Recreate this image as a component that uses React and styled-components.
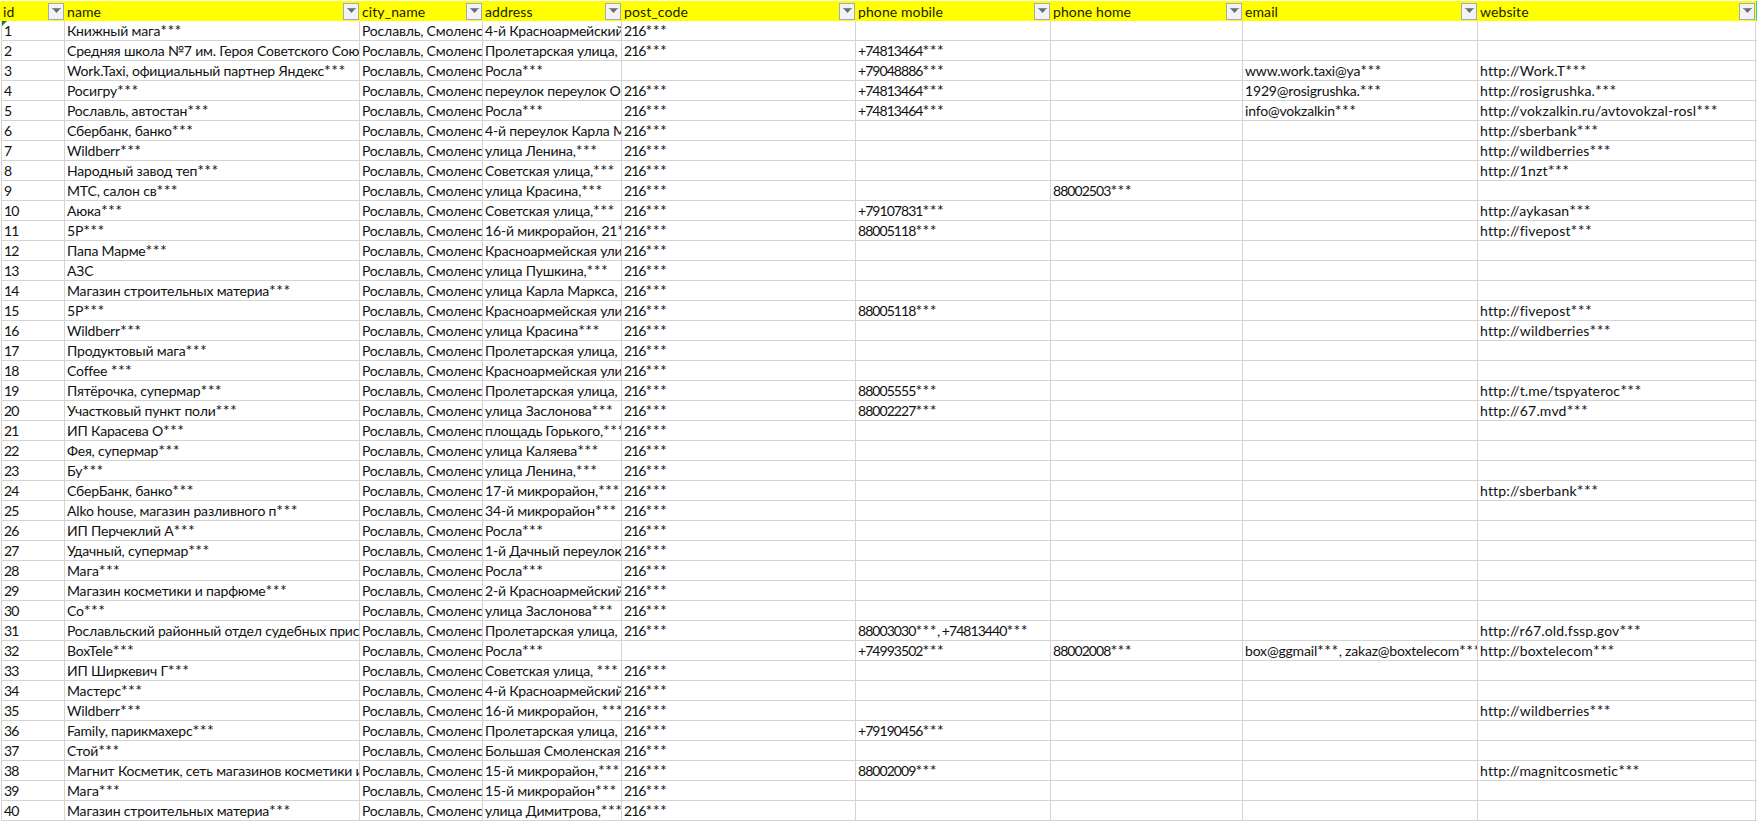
import React from 'react';
import styled, { createGlobalStyle } from 'styled-components';

const GlobalStyle = createGlobalStyle`
  html, body {
    margin: 0;
    padding: 0;
    background: #fff;
    overflow: hidden;
  }
`;

const COLS = '64px 295px 123px 139px 234px 195px 192px 235px 278px';
const SPACING = { digits: '-0.95px', link: '0.17px', text: '-0.18px' };

const Sheet = styled.div`
  width: 1757px;
  height: 821px;
  padding-left: 1px;
  box-sizing: border-box;
  overflow: hidden;
  font-family: 'Lato', 'Noto Sans', sans-serif;
  font-size: 14px;
  color: #111;
`;
const HeaderRow = styled.div`
  position: relative;
  display: grid;
  grid-template-columns: ${COLS};
  height: 20px;
  margin: 1px 0 0 -1px;
  padding-left: 1px;
  background: #ffff00;
`;
const HeaderCell = styled.div`
  display: flex;
  align-items: center;
  justify-content: space-between;
  padding: 0 1px 0 2px;
`;
const HeaderLabel = styled.span`
  line-height: 19px;
  letter-spacing: 0.1px;
  color: #1c1c00;
`;
const FilterButton = styled.div`
  width: 16px;
  height: 17px;
  box-sizing: border-box;
  display: flex;
  align-items: center;
  justify-content: center;
  border: 1px solid #a3a9b8;
  background: #f1f3f7;
`;
const SelectionEdge = styled.div`
  position: absolute;
  top: 0;
  right: 0;
  width: 1px;
  height: 20px;
  background: #2fd889;
`;
const Row = styled.div`
  display: grid;
  grid-template-columns: ${COLS};
  height: 20px;
  box-sizing: border-box;
  border-bottom: 1px solid #d4d4d4;
`;
const Cell = styled.div`
  position: relative;
  box-sizing: border-box;
  padding: 0 0 0 2px;
  border-right: 1px solid #d4d4d4;
  ${p => p.$first && 'border-left: 1px solid #d4d4d4;'}
  letter-spacing: ${p => SPACING[p.$kind || 'text']};
  white-space: nowrap;
  overflow: hidden;
  line-height: 19px;
`;
const Mask = styled.span`
  font-size: 16px;
  line-height: 0;
  letter-spacing: 0.4px;
`;
const ErrorMark = styled.span`
  position: absolute;
  top: 0;
  left: 0;
  width: 0;
  height: 0;
  border-top: 5px solid #107c41;
  border-right: 5px solid transparent;
`;

const FilterArrow = () => (
  <svg width="9" height="6" viewBox="0 0 9 6">
    <path d="M0 0.5h9" stroke="#8a8a8a" strokeWidth="1" />
    <path d="M1 1h7L4.5 5z" fill="#6b6b6b" />
  </svg>
);

// the *** masks are drawn a bit bigger than the rest, like in the sheet
const Masked = ({ text = '' }) => {
  const parts = text.split('***');
  return parts.map((part, i) => (
    <React.Fragment key={i}>
      {part}
      {i < parts.length - 1 && <Mask>***</Mask>}
    </React.Fragment>
  ));
};

const headers = ['id', 'name', 'city_name', 'address', 'post_code', 'phone mobile', 'phone home', 'email', 'website'];

const CITY = 'Рославль, Смоленская область';
const POST = '216***';

// name, address, post, mobile, home, email, website
const rows = [
  ['Книжный мага***', '4-й Красноармейский переулок', POST],
  ['Средняя школа №7 им. Героя Советского Союза', 'Пролетарская улица, 1***', POST, '+74813464***'],
  ['Work.Taxi, официальный партнер Яндекс***', 'Росла***', '', '+79048886***', '', 'www.work.taxi@ya***', 'http://Work.T***'],
  ['Росигру***', 'переулок переулок Октябрьский', POST, '+74813464***', '', '1929@rosigrushka.***', 'http://rosigrushka.***'],
  ['Рославль, автостан***', 'Росла***', POST, '+74813464***', '', 'info@vokzalkin***', 'http://vokzalkin.ru/avtovokzal-rosl***'],
  ['Сбербанк, банко***', '4-й переулок Карла Маркса', POST, '', '', '', 'http://sberbank***'],
  ['Wildberr***', 'улица Ленина,***', POST, '', '', '', 'http://wildberries***'],
  ['Народный завод теп***', 'Советская улица,***', POST, '', '', '', 'http://1nzt***'],
  ['МТС, салон св***', 'улица Красина,***', POST, '', '88002503***'],
  ['Аюка***', 'Советская улица,***', POST, '+79107831***', '', '', 'http://aykasan***'],
  ['5Р***', '16-й микрорайон, 21***', POST, '88005118***', '', '', 'http://fivepost***'],
  ['Папа Марме***', 'Красноармейская улица', POST],
  ['АЗС', 'улица Пушкина,***', POST],
  ['Магазин строительных материа***', 'улица Карла Маркса, ***', POST],
  ['5Р***', 'Красноармейская улица', POST, '88005118***', '', '', 'http://fivepost***'],
  ['Wildberr***', 'улица Красина***', POST, '', '', '', 'http://wildberries***'],
  ['Продуктовый мага***', 'Пролетарская улица, 1', POST],
  ['Coffee ***', 'Красноармейская улица', POST],
  ['Пятёрочка, супермар***', 'Пролетарская улица, 1', POST, '88005555***', '', '', 'http://t.me/tspyateroc***'],
  ['Участковый пункт поли***', 'улица Заслонова***', POST, '88002227***', '', '', 'http://67.mvd***'],
  ['ИП Карасева О***', 'площадь Горького,***', POST],
  ['Фея, супермар***', 'улица Каляева***', POST],
  ['Бу***', 'улица Ленина,***', POST],
  ['СберБанк, банко***', '17-й микрорайон,***', POST, '', '', '', 'http://sberbank***'],
  ['Alko house, магазин разливного п***', '34-й микрорайон***', POST],
  ['ИП Перчеклий А***', 'Росла***', POST],
  ['Удачный, супермар***', '1-й Дачный переулок', POST],
  ['Мага***', 'Росла***', POST],
  ['Магазин косметики и парфюме***', '2-й Красноармейский', POST],
  ['Со***', 'улица Заслонова***', POST],
  ['Рославльский районный отдел судебных приставов', 'Пролетарская улица, 1', POST, '88003030***, +74813440***', '', '', 'http://r67.old.fssp.gov***'],
  ['BoxTele***', 'Росла***', '', '+74993502***', '88002008***', 'box@ggmail***, zakaz@boxtelecom***', 'http://boxtelecom***'],
  ['ИП Ширкевич Г***', 'Советская улица, ***', POST],
  ['Мастерс***', '4-й Красноармейский', POST],
  ['Wildberr***', '16-й микрорайон, ***', POST, '', '', '', 'http://wildberries***'],
  ['Family, парикмахерс***', 'Пролетарская улица, 1', POST, '+79190456***'],
  ['Стой***', 'Большая Смоленская улица', POST],
  ['Магнит Косметик, сеть магазинов косметики и парфюмерии', '15-й микрорайон,***', POST, '88002009***', '', '', 'http://magnitcosmetic***'],
  ['Мага***', '15-й микрорайон***', POST],
  ['Магазин строительных материа***', 'улица Димитрова,***', POST],
];

const App = () => (
  <>
    <GlobalStyle />
    <Sheet>
      <HeaderRow>
        {headers.map(h => (
          <HeaderCell key={h}>
            <HeaderLabel>{h}</HeaderLabel>
            <FilterButton><FilterArrow /></FilterButton>
          </HeaderCell>
        ))}
        <SelectionEdge />
      </HeaderRow>
      {rows.map((r, idx) => (
        <Row key={idx}>
          <Cell $first $kind="digits">
            {idx === 0 && <ErrorMark />}
            {idx + 1}
          </Cell>
          <Cell><Masked text={r[0]} /></Cell>
          <Cell>{CITY}</Cell>
          <Cell><Masked text={r[1]} /></Cell>
          <Cell $kind="digits"><Masked text={r[2]} /></Cell>
          <Cell $kind="digits"><Masked text={r[3]} /></Cell>
          <Cell $kind="digits"><Masked text={r[4]} /></Cell>
          <Cell><Masked text={r[5]} /></Cell>
          <Cell $kind="link"><Masked text={r[6]} /></Cell>
        </Row>
      ))}
    </Sheet>
  </>
);

export default App;
